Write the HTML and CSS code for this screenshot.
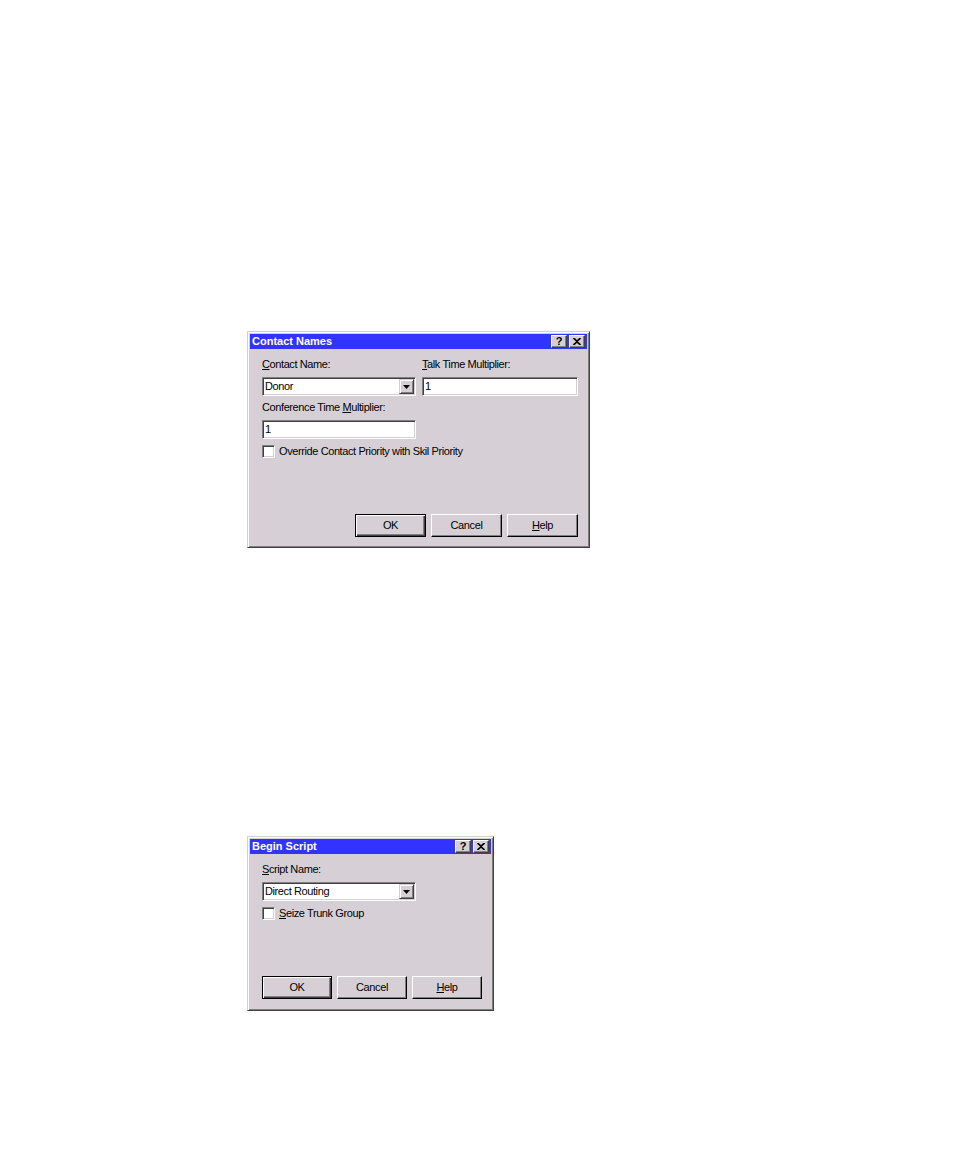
FILE: index.html
```html
<!DOCTYPE html>
<html>
<head>
<meta charset="utf-8">
<title>Dialogs</title>
<link rel="stylesheet" href="styles.css">
</head>
<body>
<div class="page">
  <div class="dialog d1">
    <div class="titlebar">
      <span class="title">Contact Names</span>
      <span class="capbtns">
        <span class="capbtn q">?</span>
        <span class="capbtn"><svg width="8" height="7" viewBox="0 0 8 7"><path d="M0.5 0 L4 3.2 L7.5 0 M0.5 7 L4 3.8 L7.5 7" stroke="#000" stroke-width="1.6" fill="none"/></svg></span>
      </span>
    </div>
    <div class="content">
      <div class="grid">
        <div class="field">
          <div class="label"><u>C</u>ontact Name:</div>
          <div class="combo"><span class="value">Donor</span><span class="dropbtn"><svg width="7" height="4" viewBox="0 0 7 4"><polygon points="0,0 7,0 3.5,4" fill="#000"/></svg></span></div>
        </div>
        <div class="field">
          <div class="label"><u>T</u>alk Time Multiplier:</div>
          <div class="input">1</div>
        </div>
      </div>
      <div class="field f2">
        <div class="label">Conference Time <u>M</u>ultiplier:</div>
        <div class="input narrow">1</div>
      </div>
      <div class="check"><span class="box"></span><span class="checklabel">Override Contact Priority with Skil Priority</span></div>
      <div class="buttons">
        <div class="btn default">OK</div>
        <div class="btn">Cancel</div>
        <div class="btn"><u>H</u>elp</div>
      </div>
    </div>
  </div>

  <div class="dialog d2">
    <div class="titlebar">
      <span class="title">Begin Script</span>
      <span class="capbtns">
        <span class="capbtn q">?</span>
        <span class="capbtn"><svg width="8" height="7" viewBox="0 0 8 7"><path d="M0.5 0 L4 3.2 L7.5 0 M0.5 7 L4 3.8 L7.5 7" stroke="#000" stroke-width="1.6" fill="none"/></svg></span>
      </span>
    </div>
    <div class="content">
      <div class="field">
        <div class="label"><u>S</u>cript Name:</div>
        <div class="combo"><span class="value">Direct Routing</span><span class="dropbtn"><svg width="7" height="4" viewBox="0 0 7 4"><polygon points="0,0 7,0 3.5,4" fill="#000"/></svg></span></div>
      </div>
      <div class="check c2"><span class="box"></span><span class="checklabel"><u>S</u>eize Trunk Group</span></div>
      <div class="buttons">
        <div class="btn default">OK</div>
        <div class="btn">Cancel</div>
        <div class="btn"><u>H</u>elp</div>
      </div>
    </div>
  </div>
</div>
</body>
</html>
```

FILE: styles.css
```css
html, body {
  margin: 0;
  padding: 0;
  background: #ffffff;
}

body {
  font-family: "Liberation Sans", Arial, sans-serif;
  font-size: 11px;
  color: #000;
}

.page {
  padding: 331px 0 0 247px;
  display: flex;
  flex-direction: column;
  align-items: flex-start;
}

.dialog {
  box-sizing: border-box;
  background: #d6d0d6;
  border: 1px solid;
  border-color: #d6d0d6 #404040 #404040 #d6d0d6;
  box-shadow: inset 1px 1px #ffffff, inset -1px -1px #808080;
  padding: 2px;
  display: flex;
  flex-direction: column;
}

.d1 {
  width: 343px;
  height: 217px;
}

.d2 {
  width: 247px;
  height: 175px;
  margin-top: 288px;
}

.titlebar {
  height: 15px;
  flex: none;
  background: #3333ff;
  display: flex;
  align-items: center;
  justify-content: space-between;
  padding-left: 2px;
  padding-right: 2px;
}

.title {
  color: #fff;
  font-weight: bold;
  font-size: 11px;
  line-height: 13px;
}

.capbtns {
  display: flex;
  gap: 2px;
}

.capbtn {
  box-sizing: border-box;
  width: 16px;
  height: 13px;
  background: #d6d0d6;
  border: 1px solid;
  border-color: #ffffff #404040 #404040 #ffffff;
  box-shadow: inset -1px -1px #808080;
  display: flex;
  align-items: center;
  justify-content: center;
  font-weight: bold;
  font-size: 11px;
  line-height: 11px;
  padding-bottom: 1px;
}

.content {
  flex: 1;
  display: flex;
  flex-direction: column;
  padding: 0 9px 8px 12px;
  letter-spacing: -0.4px;
}

.d2 .content {
  padding-bottom: 9px;
}

.grid {
  display: grid;
  grid-template-columns: 154px 156px;
  column-gap: 6px;
}

.field {
  display: flex;
  flex-direction: column;
}

.label {
  line-height: 13px;
  margin-top: 9px;
  margin-bottom: 6px;
  white-space: nowrap;
}

.f2 .label {
  margin-top: 5px;
}

.combo,
.input {
  box-sizing: border-box;
  height: 19px;
  background: #fff;
  border: 1px solid;
  border-color: #808080 #ffffff #ffffff #808080;
  box-shadow: inset 1px 1px #404040, inset -1px -1px #d6d0d6;
  display: flex;
  align-items: center;
  padding-left: 2px;
  line-height: 13px;
}

.combo {
  width: 154px;
  justify-content: space-between;
  padding-right: 1px;
}

.narrow {
  width: 154px;
}

.dropbtn {
  box-sizing: border-box;
  width: 15px;
  height: 15px;
  background: #d6d0d6;
  border: 1px solid;
  border-color: #d6d0d6 #404040 #404040 #d6d0d6;
  box-shadow: inset 1px 1px #ffffff, inset -1px -1px #808080;
  display: flex;
  align-items: center;
  justify-content: center;
}

.check {
  display: flex;
  align-items: center;
  gap: 4px;
  margin-top: 6px;
  line-height: 13px;
}

.box {
  box-sizing: border-box;
  width: 13px;
  height: 13px;
  background: #fff;
  border: 1px solid;
  border-color: #808080 #ffffff #ffffff #808080;
  box-shadow: inset 1px 1px #404040, inset -1px -1px #d6d0d6;
  flex: none;
}

.buttons {
  margin-top: auto;
  display: flex;
  justify-content: flex-end;
  gap: 5px;
}

.btn {
  box-sizing: border-box;
  width: 71px;
  height: 23px;
  background: #d6d0d6;
  border: 1px solid;
  border-color: #ffffff #000000 #000000 #ffffff;
  box-shadow: inset -1px -1px #808080;
  display: flex;
  align-items: center;
  justify-content: center;
  line-height: 13px;
}

.btn.default {
  border-color: #000000;
  box-shadow: inset 1px 1px #ffffff, inset -1px -1px #404040, inset -2px -2px #808080;
}

u {
  text-decoration: underline;
  text-underline-offset: 1px;
}
```
